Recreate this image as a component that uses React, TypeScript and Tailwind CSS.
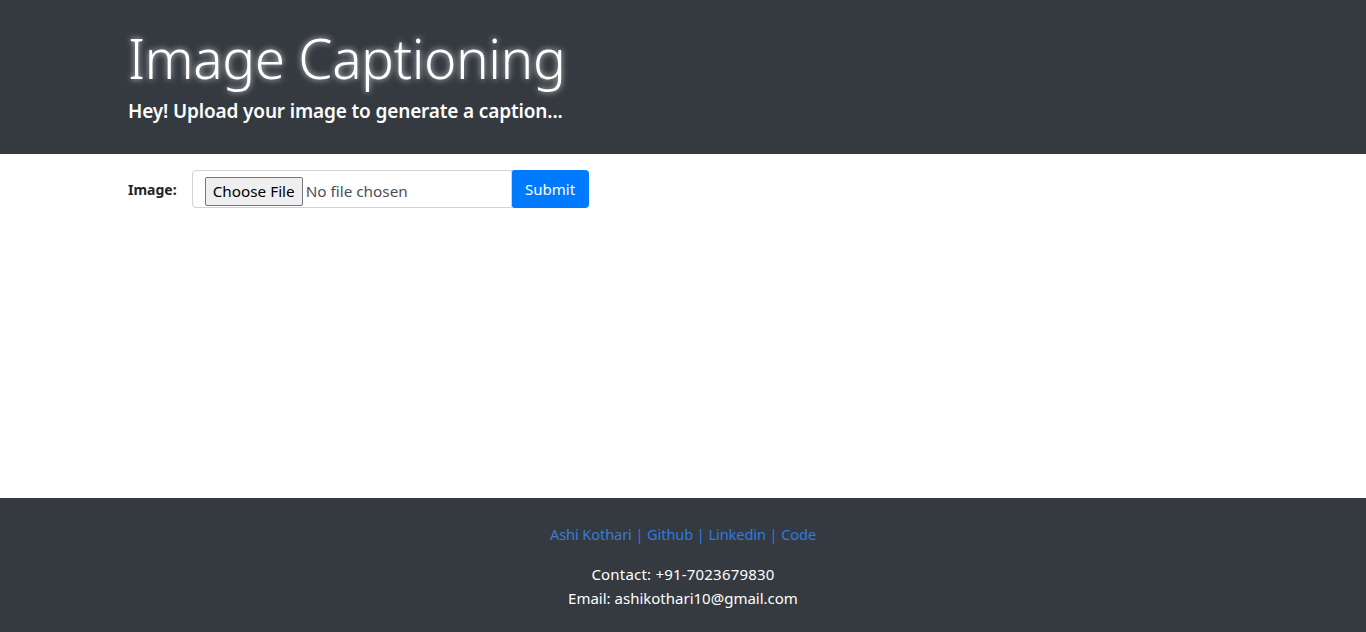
import React from "react";

export default function App() {
  const font = { fontFamily: '"Segoe UI", "Noto Sans", "Open Sans", sans-serif' };
  return (
    <div className="min-h-[632px] flex flex-col bg-white text-[#212529]" style={font}>
      <header className="bg-[#343a40] h-[154px]">
        <div className="w-[1140px] mx-auto px-[15px] pt-[25px]">
          <h1
            className="text-white text-[55px] font-light leading-[1.2] tracking-[-0.5px]"
            style={{ textShadow: "0 0 6px rgba(255,255,255,0.8)" }}
          >
            Image Captioning
          </h1>
          <h5 className="text-white text-[19px] font-semibold leading-[1.2] mt-[9px] tracking-[-0.15px]">
            Hey! Upload your image to generate a caption...
          </h5>
        </div>
      </header>
      <main className="flex-1 h-[344px]">
        <div className="w-[1140px] mx-auto px-[15px] pt-[16px]">
          <form className="flex items-start">
            <label className="text-[14px] font-bold mt-[13px] mr-[15px] leading-none">Image:</label>
            <div className="flex">
              <div className="w-[320px] h-[38px] border border-[#ced4da] rounded-l-[4px] flex items-center pl-[12px] bg-white">
                <span className="border border-[#767676] bg-[#efefef] rounded-[2px] text-[15.3px] px-[7px] h-[29px] flex items-center text-black mt-[5px]">
                  Choose File
                </span>
                <span className="text-[15.3px] text-[#495057] ml-[3px] mt-[5px]">No file chosen</span>
              </div>
              <button
                type="button"
                className="h-[38px] w-[77px] bg-[#007bff] text-white text-[15px] rounded-r-[4px] rounded-l-[2px]"
              >
                Submit
              </button>
            </div>
          </form>
        </div>
      </main>
      <footer className="bg-[#343a40] h-[134px] text-center text-[15px] text-white pt-[24px]">
        <p className="text-[#2d7be0] leading-[24px] text-[14.6px] tracking-[-0.1px]">
          <span className="text-[#3b7ccf]">Ashi Kothari</span> | Github | Linkedin | Code
        </p>
        <p className="mt-[16px] leading-[24px] tracking-[0.2px]">Contact: +91-7023679830</p>
        <p className="leading-[24px]">Email: ashikothari10@gmail.com</p>
      </footer>
    </div>
  );
}
